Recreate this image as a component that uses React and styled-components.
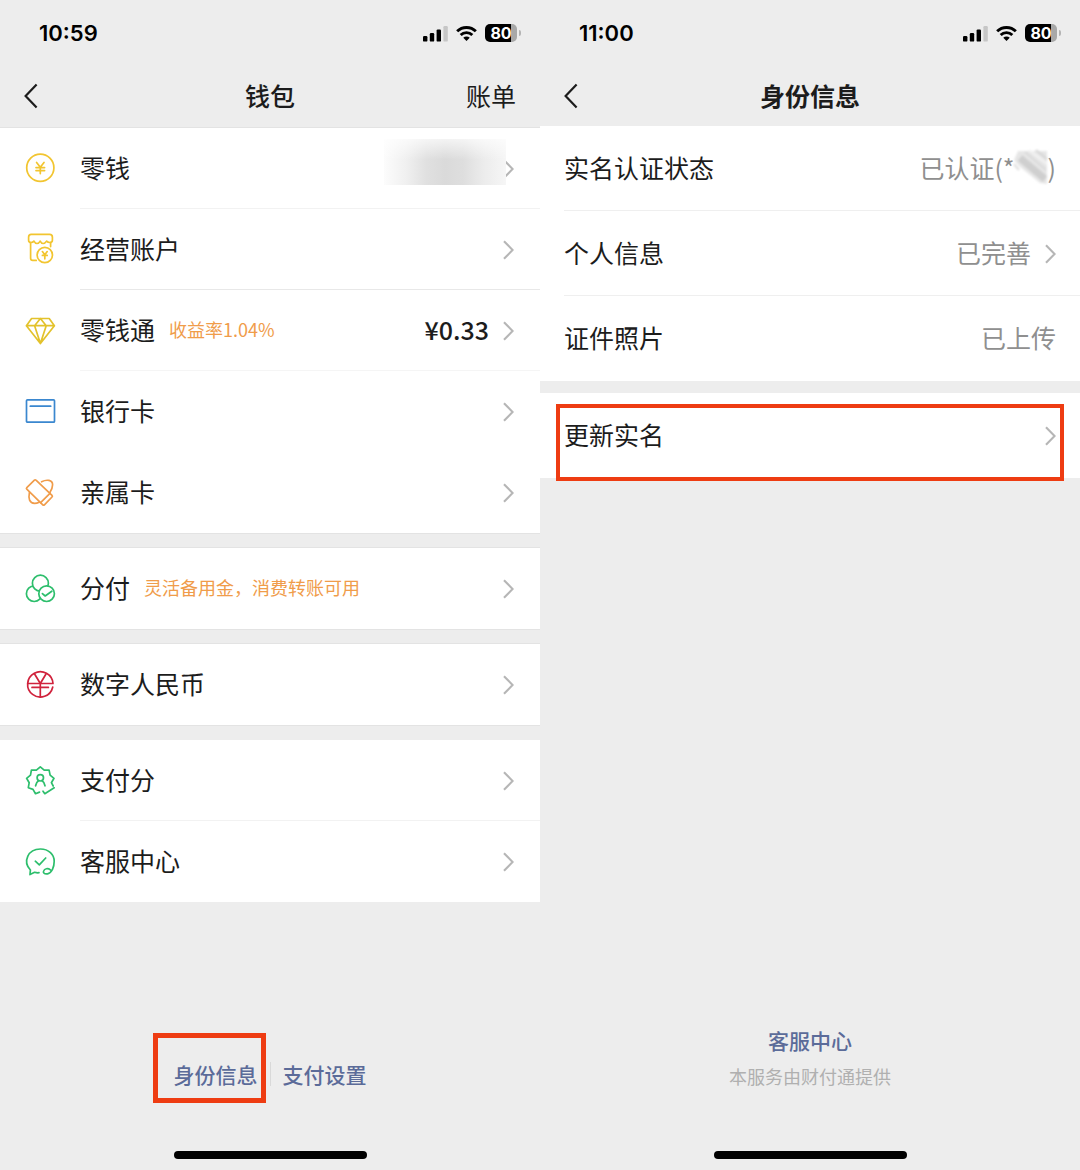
import styled, { createGlobalStyle } from "styled-components";


const GREEN = "#2dbe6c";
const YELLOW = "#f2c530";
const ORANGE = "#f09c4a";
const BLUE = "#3a87cf";
const RED = "#d0223c";


// status bar icons
const Signal = () => (
	<svg width="25" height="17" viewBox="0 0 25 17">
		<rect x="0" y="11" width="4.4" height="5.6" rx="1.2" />
		<rect x="6.8" y="8" width="4.4" height="8.6" rx="1.2" />
		<rect x="13.6" y="4.4" width="4.4" height="12.2" rx="1.2" />
		<rect x="20.4" y="1" width="4.4" height="15.6" rx="1.2" fill="#c6c6c6" />
	</svg>
)

const Wifi = () => (
	<svg width="21" height="17" viewBox="0 0 22 17" fill="none" stroke="#000" strokeWidth="3">
		<path d="M1.2 6.2a14 14 0 0 1 19.6 0" />
		<path d="M4.9 10.1a8.6 8.6 0 0 1 12.2 0" />
		<path d="M11 16.4l-3.4-3.4a4.8 4.8 0 0 1 6.8 0z" fill="#000" stroke="none" />
	</svg>
)

const Back = () => (
	<svg width="14" height="26" viewBox="0 0 14 26" fill="none" stroke="#1c1c1c" strokeWidth="2.2">
		<path d="M12.6 1.4L1.6 13l11 11.6" />
	</svg>
)

const Chevron = () => (
	<svg width="11" height="20" viewBox="0 0 11 20" fill="none" stroke="#b6b6b6" strokeWidth="2.1">
		<path d="M1 1.2L9.6 10L1 18.8" />
	</svg>
)


// wallet icons
const Coin = () => (
	<Icon color={YELLOW}>
		<circle cx="15.3" cy="14.7" r="13.6" />
		<path d="M11.6 9.4l3.7 4.800 3.700-4.800M15.300 14.200v6.400M11 14.600h8.600M11 17.600h8.600" />
	</Icon>
)

const Shop = () => (
	<Icon color={YELLOW}>
		<path d="M5.600 8.600v15.600q0 2.200 2.200 2.200h3.400M25.600 8.600v4" />
		<path d="M6.200.4h18.400q2.800 0 2.800 2.800v3q0 2.300-2.600 2.300-2 0-3.200-1.400-1.600 2.400-3.400 2.400t-3-2.400q-1.400 2.400-3.200 2.400T9 7.100Q7.800 8.500 6 8.500 3.600 8.500 3.600 6.200v-3Q3.600.4 6.200.4z" />
		<circle cx="19.800" cy="21" r="7.700" />
		<path d="M17.400 17.600l2.400 3.200 2.400-3.200M19.800 20.800v4M17.400 21.400h4.800" />
	</Icon>
)

const Diamond = () => (
	<Icon color="#e3c22c">
		<path d="M6.600 3.500h17.600l5.200 7.200L15.400 28.600 1.400 10.700zM1.400 10.700h28M15.400 3.500l-5.800 7.200 5.800 17.900 5.800-17.900z" />
	</Icon>
)

const Card = () => (
	<Icon color={BLUE}>
		<rect x="1.500" y="3.800" width="28" height="22.400" rx="1" />
		<path d="M5.300 10.200h20.400" />
	</Icon>
)

const Family = () => (
	<Icon color={ORANGE}>
		<path d="M9.400 3.200L1.800 10.600q-.8.8 0 1.600l16 15.600q.8.8 1.600 0l7.600-7.800q.8-.8 0-1.600L11 3.200q-.8-.8-1.600 0z" />
		<path d="M15.600 25.600l9.600-9.400" />
		<path d="M16.600 4.800c5-2.600 11-2 11 3 0 3-1 5-2.800 7.800M4.400 15.600c-1.200 6 0 10.600 5.200 10.800 1.700 0 3-.4 4.600-1.200" />
	</Icon>
)

const Circles = () => (
	<Icon color={GREEN}>
		<circle cx="9.200" cy="20.700" r="7.800" />
		<circle cx="15.400" cy="10.200" r="8" fill="#fff" />
		<circle cx="21.600" cy="20.700" r="7.800" fill="#fff" />
		<path d="M17.400 20.600l2.800 2.400 6.600-4.800" />
	</Icon>
)

const Rmb = () => (
	<Icon color={RED}>
		<path d="M27.700 18.200A12.700 12.700 0 1 1 28 14.500H2.600" />
		<path d="M9.600 5l5.700 9.500L21 5M15.300 14.500V28M7 18.400h16.400" />
	</Icon>
)

const Score = () => (
	<Icon color={GREEN}>
		<path d="M28.200 21l-1.800-3.300 2.600-4.400-3.900-3.200-1-5-4.900 0-3.900-3.300-3.900 3.300-5 0-.9 5-3.900 3.200 2.600 4.400-.9 5 4.700 1.700 2.500 4.300 4-1.600" />
		<path d="M18 26.200l1.800 2.500 9.400-5.900" />
		<circle cx="15.300" cy="12.800" r="3.200" />
		<path d="M10.600 20.800q.8-3.800 3.200-5.200M20 20.800q-.8-3.800-3.200-5.200" />
	</Icon>
)

const Service = () => (
	<Icon color={GREEN}>
		<path d="M14 26.700q-2 .3-4.400-.4L5 28.600l.4-4.600C-2.600 15.500 3 3 15.400 3c8.400 0 13.800 5.600 13.800 12.200 0 5.800-2.400 11.600-6.600 12.600-3 .7-4.800-1-4-2.800 1-2.400 4.200-3.200 6.800-1.200" />
		<path d="M10.300 15.200l4 3.600 6.400-6.800" />
	</Icon>
)

// scribbled out part of the real name
const Scribble = () => (
	<ScribbleArt viewBox="0 0 38 38" fill="none">
		<defs>
			<filter id="smear"><feGaussianBlur stdDeviation="1.300" /></filter>
		</defs>
		<g filter="url(#smear)">
			<path d="M3 12L7 3h29v33l-7-1L8 18z" fill="#e6e6e6" />
			<path d="M9 10l25 21" stroke="#cfcfcf" strokeWidth="7" />
			<path d="M18 2l18 14" stroke="#f4f4f4" strokeWidth="2" />
			<path d="M14 4l21 18" stroke="#dadada" strokeWidth="2" />
			<path d="M25 2l11 9" stroke="#d6d6d6" strokeWidth="2" />
			<path d="M3 16l5 6" stroke="#dedede" strokeWidth="2" />
		</g>
	</ScribbleArt>
)


const Wallet = () => (
	<Panel>
		<StatusBar time="10:59" />
		<Nav>
			<NavButton aria-label="返回"><Back /></NavButton>
			<Title $weight={500}>钱包</Title>
			<NavButton $end><Label>账单</Label></NavButton>
		</Nav>
		<Groups $gap={15} $top={2}>
			{groups.map((rows, i) => (
				<Group key={i} $outlined={i < 3}>
					{rows.map((row) => (
						<Row key={row.label}>
							{row.icon}
							<RowBody $line={row.line}>
								<Label>{row.label}</Label>
								{row.hint && <Hint>{row.hint}</Hint>}
								<Value>{row.hidden ? <Mosaic /> : row.value}</Value>
								<Chevron />
							</RowBody>
						</Row>
					))}
				</Group>
			))}
		</Groups>
		<Footer $bottom={62}>
			<Links>
				<FootLink href="#identity">身份信息<Mark $thick={5} $inset="-26px -8px -14px -21px" /></FootLink>
				<Separator />
				<FootLink href="#payment">支付设置</FootLink>
			</Links>
		</Footer>
		<HomeBar />
	</Panel>
)


const groups = [
	[
		{ label: "零钱", icon: <Coin />, hidden: true, line: "#f2f2f2" },
		{ label: "经营账户", icon: <Shop />, line: "#e8e8e8" },
		{ label: "零钱通", icon: <Diamond />, hint: "收益率1.04%", value: "¥0.33", line: "#f5f5f5" },
		{ label: "银行卡", icon: <Card /> },
		{ label: "亲属卡", icon: <Family /> },
	],
	[{ label: "分付", icon: <Circles />, hint: "灵活备用金，消费转账可用" }],
	[{ label: "数字人民币", icon: <Rmb /> }],
	[
		{ label: "支付分", icon: <Score />, line: "#f2f2f2" },
		{ label: "客服中心", icon: <Service /> },
	],
]


const StatusBar = ({ time }) => (
	<Status>
		<Time>{time}</Time>
		<StatusIcons>
			<Signal />
			<Wifi />
			<Battery>80</Battery>
		</StatusIcons>
	</Status>
)


const Identity = () => (
	<Panel>
		<StatusBar time="11:00" />
		<Nav>
			<NavButton aria-label="返回"><Back /></NavButton>
			<Title $weight={700}>身份信息</Title>
		</Nav>
		<Groups $gap={12}>
			<Group>
				<InfoBody $line="#efefef">
					<Label>实名认证状态</Label>
					<Value $muted>已认证(*<Scribble />)</Value>
				</InfoBody>
				<InfoBody $line="#efefef">
					<Label>个人信息</Label>
					<Value $muted>已完善</Value>
					<Chevron />
				</InfoBody>
				<InfoBody>
					<Label>证件照片</Label>
					<Value $muted>已上传</Value>
				</InfoBody>
			</Group>
			<Group>
				<InfoBody>
					<Label>更新实名</Label>
					<Value />
					<Chevron />
					<Mark $thick={4} $inset="11px 16px -3px -8px" />
				</InfoBody>
			</Group>
		</Groups>
		<Footer $bottom={60}>
			<FootLink href="#service">客服中心</FootLink>
			<Note>本服务由财付通提供</Note>
		</Footer>
		<HomeBar />
	</Panel>
)


const App = () => (
	<>
		<GlobalStyle />
		<Screens>
			<Wallet />
			<Identity />
		</Screens>
	</>
)


const GlobalStyle = createGlobalStyle`
	* {
		box-sizing: border-box;
	}
	body {
		margin: 0;
		background: #ededed;
		color: #1c1c1c;
		font-family: "Noto Sans CJK SC", sans-serif;
	}
	button {
		border: none;
		background: none;
		padding: 0;
		color: inherit;
		font: inherit;
		cursor: pointer;
	}
	svg {
		display: block;
		flex: none;
	}
`

const Screens = styled.main`
	display: grid;
	grid-template-columns: 1fr 1fr;
	min-height: 100vh;
`

const Panel = styled.section`
	display: flex;
	flex-direction: column;
	align-items: stretch;
	min-width: 0;
`

const Status = styled.header`
	display: flex;
	justify-content: space-between;
	align-items: center;
	height: 66px;
	padding: 0 19px 0 39px;
	color: #000;
`

const Time = styled.span`
	font-family: Inter, sans-serif;
	font-size: 22px;
	font-weight: 600;
`

const StatusIcons = styled.div`
	display: flex;
	align-items: center;
	gap: 8px;
`

const Battery = styled.div`
	position: relative;
	width: 32px;
	height: 18px;
	margin-right: 4px;
	border-radius: 5px;
	background: linear-gradient(to right, #000 80%, #a8a8a8 80%);
	color: #fff;
	font: 700 16px/18px Inter, sans-serif;
	text-align: center;

	&::after {
		content: "";
		position: absolute;
		right: -4px;
		top: 6px;
		width: 2px;
		height: 6px;
		border-radius: 0 2px 2px 0;
		background: #b4b4b4;
	}
`

const Nav = styled.nav`
	display: grid;
	grid-template-columns: 1fr auto 1fr;
	align-items: center;
	height: 60px;
	padding: 0 24px;
`

const NavButton = styled.button`
	justify-self: ${({ $end }) => ($end ? "end" : "start")};
`

const Title = styled.h1`
	margin: 0;
	padding-bottom: 3px;
	font-size: 25px;
	line-height: 36px;
	font-weight: ${({ $weight }) => $weight};
`

const Groups = styled.div`
	display: flex;
	flex-direction: column;
	gap: ${({ $gap }) => $gap}px;
	padding-top: ${({ $top }) => $top || 0}px;
`

const Group = styled.div`
	background: #fff;
	box-shadow: ${({ $outlined }) => ($outlined ? "0 1px #e3e3e3, 0 -1px #e3e3e3" : "none")};
`

const Row = styled.button`
	display: flex;
	align-items: center;
	width: 100%;
	height: 81px;
	padding-left: 25px;
	text-align: left;
`

const RowBody = styled.span`
	flex: 1;
	display: flex;
	align-items: center;
	height: 100%;
	margin-left: 24px;
	padding-right: 26px;
	box-shadow: ${({ $line }) => ($line ? `inset 0 -1px ${$line}` : "none")};
`

const InfoBody = styled.div`
	position: relative;
	display: flex;
	align-items: center;
	height: 85px;
	margin-left: 24px;
	padding-right: 24px;
	box-shadow: ${({ $line }) => ($line ? `inset 0 -1px ${$line}` : "none")};
`

const Icon = styled.svg.attrs({ width: 31, height: 31, viewBox: "0 0 31 31" })`
	fill: none;
	stroke: ${({ color }) => color};
	stroke-width: 1.7;
	stroke-linecap: round;
	stroke-linejoin: round;
	overflow: visible;
`

// the glyphs sit low in their line box, the padding lifts them to the middle
const Label = styled.span`
	display: block;
	padding-bottom: 3px;
	font-size: 25px;
	line-height: 36px;
`

const Hint = styled.span`
	margin-left: 14px;
	padding-bottom: 3px;
	color: ${ORANGE};
	font-size: 18px;
	line-height: 36px;
`

const Value = styled.span`
	flex: 1;
	display: flex;
	justify-content: flex-end;
	align-items: center;
	padding-bottom: 3px;
	color: ${({ $muted }) => ($muted ? "#8f8f8f" : "#1c1c1c")};
	font-size: 25px;
	font-weight: ${({ $muted }) => ($muted ? 400 : 500)};
	line-height: 36px;

	& + svg {
		margin-left: 14px;
	}
`

const ScribbleArt = styled.svg`
	width: 38px;
	height: 38px;
	margin: 0 -1px 0 -4px;
`

// the balance is hidden behind a mosaic that runs over the chevron's edge
const Mosaic = styled.span`
	position: relative;
	width: 122px;
	height: 46px;
	margin: -10px -17px 0 0;
	background:
		linear-gradient(to bottom, #ffffffb0, #ffffff00 45%),
		linear-gradient(to right, #fcfcfc, #f0f0f0 18%, #e0e0e0 35%, #dadada 50%, #dedede 65%, #ececec 82%, #f6f6f6);
`

// red frame laid over the thing to tap
const Mark = styled.span`
	position: absolute;
	inset: ${({ $inset }) => $inset};
	border: ${({ $thick }) => $thick}px solid #ee3c12;
	pointer-events: none;
`

const Footer = styled.footer`
	display: flex;
	flex-direction: column;
	align-items: center;
	gap: 6px;
	margin-top: auto;
	padding-bottom: ${({ $bottom }) => $bottom}px;
`

const Links = styled.div`
	display: flex;
	align-items: center;
	gap: 12px;
`

const FootLink = styled.a`
	position: relative;
	color: #5b6b99;
	font-size: 21px;
	line-height: 30px;
	font-weight: 500;
	text-decoration: none;
`

const Separator = styled.span`
	width: 1px;
	height: 24px;
	background: #d9d9d9;
`

const Note = styled.span`
	color: #b0b0b0;
	font-size: 18px;
	line-height: 30px;
`

const HomeBar = styled.div`
	align-self: center;
	width: 193px;
	height: 8px;
	margin-bottom: 11px;
	border-radius: 4px;
	background: #000;
`


export default App;
